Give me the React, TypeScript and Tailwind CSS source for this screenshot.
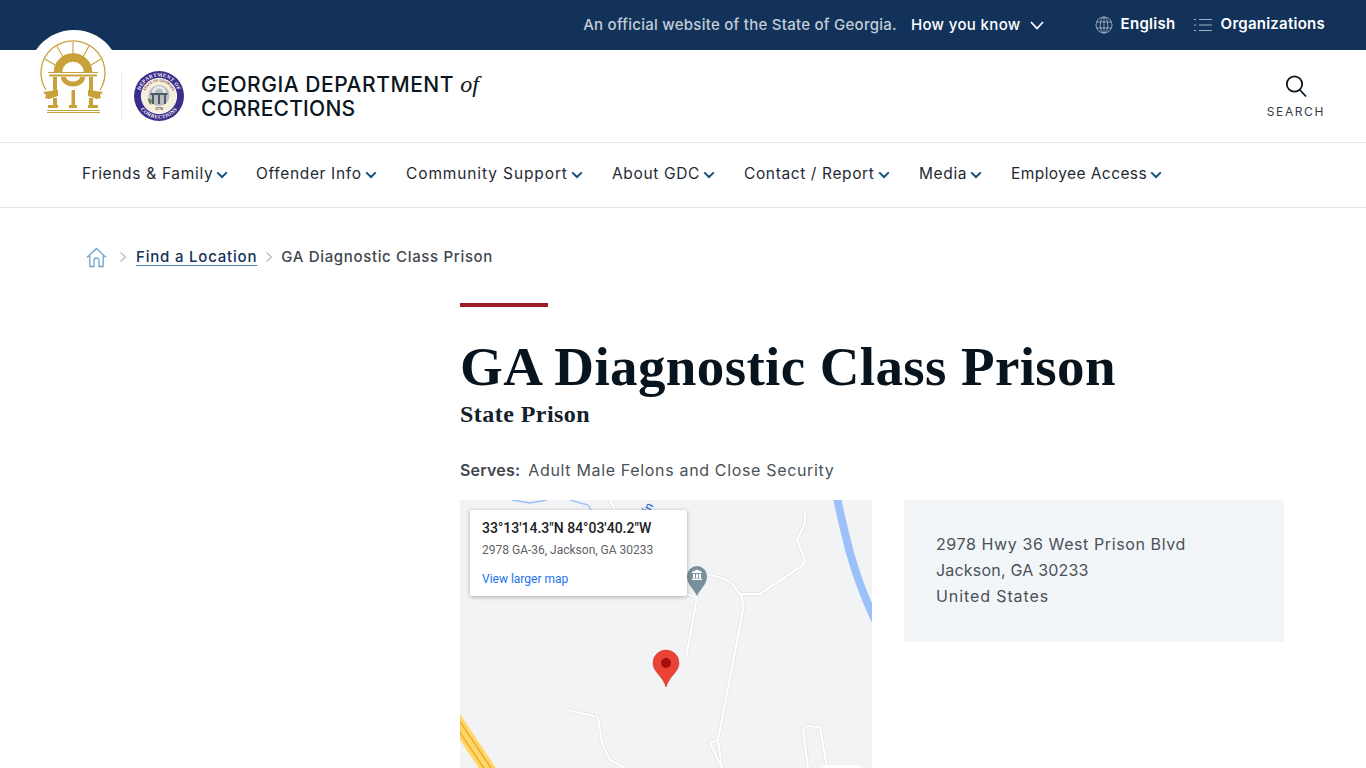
import React from "react";

const sans = "font-['Inter','Liberation_Sans',sans-serif]";

function Chevron() {
  return (
    <svg width="12" height="8" viewBox="0 0 12 8" fill="none" className="ml-[3px] mt-[2px]">
      <path d="M1.2 1.4 6 6 10.8 1.4" stroke="#14517f" strokeWidth="2" />
    </svg>
  );
}

function Logo() {
  const g = "#c9a13b";
  return (
    <svg width="92" height="92" viewBox="28 28 92 92" className="absolute left-[28px] top-[28px]">
      <path d="M36 50 A46 46 0 0 1 112 50 Z" fill="#fff" />
      <path d="M46 90 A32 32 0 1 1 100 90" fill="none" stroke={g} strokeWidth="1.3" />
      <path d="M73 42 V54 M57 46 L63 57 M89 46 L83 57 M45 59 L55 65 M101 59 L91 65" stroke={g} strokeWidth="1.1" />
      <path d="M58 72 A15 14.5 0 0 1 88 72" fill="none" stroke={g} strokeWidth="8.5" />
      <path d="M48 72.5 H98" stroke={g} strokeWidth="1" />
      <path d="M49 75.5 H97" stroke={g} strokeWidth="2.2" />
      <path d="M63.5 77 A9.5 7 0 0 0 82.5 77" fill="none" stroke={g} strokeWidth="5" />
      <path d="M53 77 H57 V92 H53 Z M71.5 90 H75 V105 H71.5 Z M89 77 H93 V92 H89 Z M53 98 H57 V105 H53 Z M89 98 H93 V105 H89 Z" fill={g} />
      <path d="M43 92 L58 90 V96 L49 99 L45 98 L46 95 Z M103 92 L88 90 V96 L97 99 L101 98 L100 95 Z" fill={g} />
      <path d="M48 105 H58 V108 H48 Z M69 105 H77 V108 H69 Z M88 105 H98 V108 H88 Z" fill={g} />
      <path d="M47 110.5 H100 M47 112.5 H100" stroke={g} strokeWidth="1" />
    </svg>
  );
}

function Seal() {
  return (
    <svg width="50" height="50" viewBox="0 0 50 50" className="shrink-0">
      <circle cx="25" cy="25" r="25" fill="#3b2d8a" />
      <circle cx="25" cy="25" r="17.6" fill="#f5efdc" stroke="#fff" strokeWidth="1" />
      <defs>
        <path id="sealTop" d="M5.6 25 A19.4 19.4 0 0 1 44.4 25" />
        <path id="sealBottom" d="M2.4 25 A22.6 22.6 0 0 0 47.6 25" />
        <path id="sealInner" d="M10.5 25 A14.5 14.5 0 0 1 39.5 25" />
      </defs>
      <text fontSize="5.2" fontFamily="Liberation Serif, serif" fill="#fff" fontWeight="700" letterSpacing=".35">
        <textPath href="#sealTop" startOffset="50%" textAnchor="middle">DEPARTMENT OF</textPath>
      </text>
      <text fontSize="5.2" fontFamily="Liberation Serif, serif" fill="#fff" fontWeight="700" letterSpacing=".35">
        <textPath href="#sealBottom" startOffset="50%" textAnchor="middle">CORRECTIONS</textPath>
      </text>
      <text fontSize="3.6" fontFamily="Liberation Serif, serif" fill="#7c3440" fontWeight="700">
        <textPath href="#sealInner" startOffset="50%" textAnchor="middle">STATE OF GEORGIA</textPath>
      </text>
      <circle cx="25" cy="24.5" r="10.5" fill="#b9bdc3" />
      <path d="M18 22 A7 7 0 0 1 32 22 H29.5 A4.5 4.5 0 0 0 20.5 22 Z" fill="#eceded" />
      <path d="M16.5 22 H33.5 V24 H16.5 Z M18 24 H20 V33 H18 Z M24 24 H26 V33 H24 Z M30 24 H32 V33 H30 Z" fill="#4d5b69" />
      <path d="M13.5 27 L18 29 L17 34 L15 32 Z" fill="#6d7f53" />
      <text x="25" y="38.7" fontSize="3.8" textAnchor="middle" fontFamily="Liberation Serif, serif" fill="#333" fontWeight="700">1776</text>
    </svg>
  );
}

function MapView() {
  return (
    <div className="relative w-[412px] h-[400px] shrink-0 bg-[#f1f3f4] overflow-hidden font-['Roboto',sans-serif]">
      <svg width="412" height="400" viewBox="0 0 412 400" className="absolute left-0 top-0" fill="none">
        <path d="M377 -2 Q382 22 390 53 Q400 88 415 120" stroke="#9cc0f9" strokeWidth="8" />
        <path d="M52 0 L70 3 L87 0 M110 0 L128 5 L131 10" stroke="#9cc0f9" strokeWidth="1.3" />
        <g strokeLinejoin="round" stroke="#e1e3e6" strokeWidth="3.6">
          <path d="M150 0 L155 10" />
          <path d="M345 13 V23 L337 40 L345 60 L343 65 L300 94 H282" />
          <path d="M248 75 Q262 76 272 84 L282 96 L283 110 L258 240 L250 243 L262 268" />
          <path d="M258 240 L262 268 M220 92 L237 97 L226 158" />
          <path d="M107 210 L138 217 L142 243 L150 260 L163 267 L180 275" />
          <path d="M348 268 L343 230 L347 226 L360 227 L367 268" />
        </g>
        <g strokeLinejoin="round" stroke="#fff" strokeWidth="2.2">
          <path d="M150 0 L155 10" />
          <path d="M345 13 V23 L337 40 L345 60 L343 65 L300 94 H282" />
          <path d="M248 75 Q262 76 272 84 L282 96 L283 110 L258 240 L250 243 L262 268" />
          <path d="M258 240 L262 268 M220 92 L237 97 L226 158" />
          <path d="M107 210 L138 217 L142 243 L150 260 L163 267 L180 275" />
          <path d="M348 268 L343 230 L347 226 L360 227 L367 268" />
        </g>
        <path d="M-8 215 L40 287" stroke="#fde293" strokeWidth="15" />
        <path d="M-8 215 L40 287" stroke="#fdd663" strokeWidth="13" />
        <path d="M-5.5 213.3 L42.5 285.3 M-10.5 216.7 L37.5 288.7" stroke="#eda63a" strokeWidth="1.4" />
        <text x="189" y="14" transform="rotate(-62 189 14)" fontSize="12" fontWeight="500" fill="#3c78d8" fontFamily="Roboto, sans-serif">in</text>
        <path d="M237 96 C234 89 227 85 227 76 A10 10 0 0 1 247 76 C247 85 240 89 237 96 Z" fill="#78909c" />
        <path d="M232 72 L237 69.5 L242 72 V73 H232 Z M233 74 H235 V78 H233 Z M236 74 H238 V78 H236 Z M239 74 H241 V78 H239 Z M232 78.5 H242 V80 H232 Z" fill="#fff" />
        <path d="M206 187 C203 176 193 172 193 163 A13 13 0 0 1 219 163 C219 172 209 176 206 187 Z" fill="#ea4335" stroke="#d5352a" strokeWidth=".6" />
        <circle cx="206" cy="163" r="5" fill="#a50e0e" />
      </svg>
      <div className="absolute left-[362px] top-[265px] w-[40px] h-[60px] bg-white rounded-sm" />
      <div className="absolute left-[10px] top-[10px] w-[217px] h-[86px] bg-white rounded-[2px] shadow-[0_1px_4px_rgba(0,0,0,0.3)] pl-3 pt-[9px]">
        <div className="text-[14px] leading-[18px] font-medium text-[#202124]">33°13'14.3"N 84°03'40.2"W</div>
        <div className="text-[12px] leading-[16px] mt-[5px] text-[#5f6368]">2978 GA-36, Jackson, GA 30233</div>
        <div className="text-[12px] leading-[16px] mt-[13px] text-[#1a73e8]">View larger map</div>
      </div>
    </div>
  );
}

const nav: [string, number, number][] = [
  ["Friends & Family", 174, 0.68],
  ["Offender Info", 150, 0.66],
  ["Community Support", 206, 0.88],
  ["About GDC", 132, 0.66],
  ["Contact / Report", 175, 0.62],
  ["Media", 92, 0.62],
  ["Employee Access", 160, 0.42],
];

export default function App() {
  return (
    <div className={`relative h-[768px] w-full overflow-hidden bg-white ${sans}`}>
      <div className="h-[50px] bg-[#12325a] flex items-center justify-end pr-[41px] text-[15px]">
        <span className="text-[#c3ccd7] font-medium tracking-[0.26px] mr-[14px]">An official website of the State of Georgia.</span>
        <span className="text-white font-medium tracking-[0.35px]">How you know</span>
        <svg width="14" height="9" viewBox="0 0 14 9" fill="none" className="ml-[9px] mr-[51px]">
          <path d="M1 1 7 7.5 13 1" stroke="#fff" strokeWidth="1.8" />
        </svg>
        <svg width="18" height="18" viewBox="0 0 18 18" fill="none" stroke="#9fb0c3" strokeWidth=".9" className="mr-[8px]">
          <circle cx="9" cy="9" r="8" />
          <ellipse cx="9" cy="9" rx="3.8" ry="8" />
          <path d="M9 1V17M1.5 6H16.5M1.5 12H16.5" />
        </svg>
        <span className="text-white font-semibold tracking-[0.3px] mr-[17px] -mt-[2px]">English</span>
        <svg width="19" height="14" viewBox="0 0 19 14" fill="none" stroke="#9fb0c3" strokeWidth="1" className="mr-[9px]">
          <path d="M6 1.5H19M6 7H19M6 12.5H19" />
          <path d="M1 1.5H3M1 7H3M1 12.5H3" />
        </svg>
        <span className="text-white font-semibold tracking-[0.25px] -mt-[2px]">Organizations</span>
      </div>

      <div className="h-[93px] border-b border-[#e5e7eb] flex items-center pl-[121px] pr-[41px]">
        <div className="w-px h-[50px] bg-[#eceff1] mr-[12px] mt-[-1px]" />
        <Seal />
        <div className="ml-[17px] text-[21px] leading-[24px] text-[#0b1620] font-medium">
          <div className="tracking-[0.54px]">GEORGIA DEPARTMENT <span className="font-['Liberation_Serif',serif] italic font-normal text-[24px] tracking-normal">of</span></div>
          <div className="tracking-[0.23px]">CORRECTIONS</div>
        </div>
        <div className="ml-auto flex flex-col items-center mt-[2px]">
          <svg width="24" height="24" viewBox="0 0 24 24" fill="none" stroke="#0b1620" strokeWidth="1.8">
            <circle cx="10.5" cy="10" r="7.7" />
            <path d="M16 16 22 22.5" />
          </svg>
          <div className="text-[12px] leading-[16px] mt-[6px] tracking-[1.6px] text-[#333b44]">SEARCH</div>
        </div>
      </div>

      <Logo />

      <nav className="h-[65px] border-b border-[#e5e7eb] flex items-center pl-[82px]">
        {nav.map(([t, w, s]) => (
          <div key={t} className="flex items-center -mt-[2px]" style={{ width: w }}>
            <span className="text-[15.5px] text-[#1f2a35] whitespace-nowrap" style={{ letterSpacing: s }}>{t}</span>
            <Chevron />
          </div>
        ))}
      </nav>

      <div className="flex items-center h-[22px] mt-[38px] pl-[86px] text-[15px] font-medium tracking-[0.66px]">
        <svg width="21" height="21" viewBox="0 0 21 21" fill="none" stroke="#6ea4d0" strokeWidth="1.3">
          <path d="M1 10.5 10.5 1.5 20 10.5" />
          <path d="M3.8 8.5V19.5H8V13.5A2.5 2.5 0 0 1 13 13.5V19.5H17.2V8.5" />
        </svg>
        <svg width="8" height="12" viewBox="0 0 8 12" fill="none" stroke="#a9b8c6" strokeWidth="1.1" className="ml-[12px]">
          <path d="M1.5 1.5 6.5 6 1.5 10.5" />
        </svg>
        <a className="ml-[9px] text-[#12325a] tracking-[0.8px] underline underline-offset-[3px] decoration-[#4d7fa8]">Find a Location</a>
        <svg width="8" height="12" viewBox="0 0 8 12" fill="none" stroke="#a9b8c6" strokeWidth="1.1" className="ml-[8px]">
          <path d="M1.5 1.5 6.5 6 1.5 10.5" />
        </svg>
        <span className="ml-[8px] text-[#3f464e]">GA Diagnostic Class Prison</span>
      </div>

      <main className="pl-[460px] pr-[82px] pt-[35px]">
        <div className="w-[88px] h-1 bg-[#9b1c24]" />
        <h1 className="mt-[28px] font-['Liberation_Serif',serif] font-bold text-[55px] leading-[64px] tracking-[0.37px] text-[#07141e] whitespace-nowrap">GA Diagnostic Class Prison</h1>
        <h2 className="font-['Liberation_Serif',serif] font-bold text-[24px] leading-[30px] text-[#12202c] tracking-[0.45px]">State Prison</h2>
        <p className="mt-[29px] text-[16px] leading-[24px] tracking-[0.66px] text-[#4a5158]">
          <span className="font-semibold text-[#3f464e] tracking-[0.2px]">Serves:</span>
          <span className="ml-[8px]">Adult Male Felons and Close Security</span>
        </p>
        <div className="flex mt-[18px] gap-8">
          <MapView />
          <div className="w-[380px] h-[142px] bg-[#f3f6f9] pl-8 pt-[31px] text-[16px] leading-[26px] text-[#4a5158]">
            <div className="tracking-[0.6px]">2978 Hwy 36 West Prison Blvd</div>
            <div className="tracking-[0.2px]">Jackson, GA 30233</div>
            <div className="tracking-[0.9px]">United States</div>
          </div>
        </div>
      </main>
    </div>
  );
}
